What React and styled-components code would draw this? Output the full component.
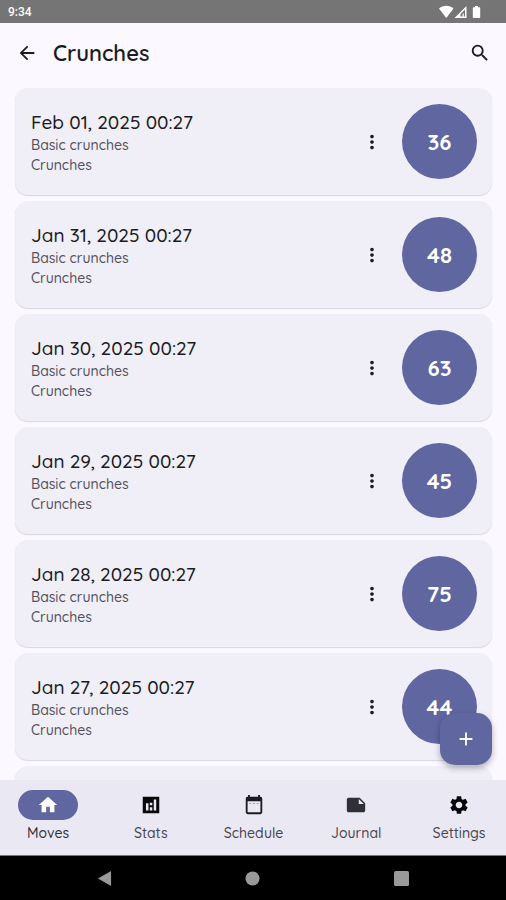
import React from 'react';
import styled, { createGlobalStyle } from 'styled-components';
import {
  MdAdd,
  MdArrowBack,
  MdHome,
  MdMoreVert,
  MdNote,
  MdSearch,
  MdSettings,
} from 'react-icons/md';

const GlobalStyle = createGlobalStyle`
  :root {
    --c-primary: #6066a0;
    --c-background: #fbf8ff;
    --c-card: #f0eef7;
    --c-nav: #eae8f3;
    --c-text: #1b1b21;
    --c-text-muted: #53525c;
  }

  *,
  *::before,
  *::after {
    box-sizing: border-box;
  }

  body {
    margin: 0;
    background: var(--c-background);
    color: var(--c-text);
    font-family: Quicksand, Inter, sans-serif;
  }

  button {
    padding: 0;
    border: 0;
    background: none;
    color: inherit;
    font: inherit;
    cursor: pointer;
  }
`;

const Screen = styled.div`
  display: flex;
  flex-direction: column;
  height: 100vh;
`;

const StatusBar = styled.div`
  display: flex;
  flex: none;
  align-items: center;
  justify-content: space-between;
  height: 23px;
  padding: 0 24px 0 8px;
  background: #757575;
  color: #fff;
  font-family: Roboto, sans-serif;
  font-size: 12px;
  line-height: 16px;
  font-weight: 500;
`;

const StatusIcons = styled.svg`
  display: block;
  width: 43px;
  height: 14px;
`;

const Header = styled.header`
  display: flex;
  flex: none;
  align-items: center;
  height: 60px;
  padding: 0 4px 0 5px;
`;

const IconButton = styled.button`
  display: grid;
  flex: none;
  place-items: center;
  width: 44px;
  height: 44px;
  font-size: 22px;
`;

const Title = styled.h1`
  flex: 1;
  margin: 0 0 0 4px;
  font-size: 22px;
  line-height: 28px;
  font-weight: 600;
`;

const Main = styled.main`
  position: relative;
  flex: 1;
  min-height: 0;
`;

const EntryList = styled.ul`
  display: flex;
  flex-direction: column;
  gap: 6px;
  height: 100%;
  margin: 0;
  padding: 5px 14px 5px 15px;
  overflow: hidden;
  list-style: none;
`;

const Card = styled.li`
  display: flex;
  flex: none;
  align-items: center;
  gap: 8px;
  padding: 16px 15px 16px 16px;
  border-radius: 13px;
  background: var(--c-card);
  box-shadow: 0 1px 1px rgba(40, 40, 70, 0.16);
`;

const EntryText = styled.div`
  flex: 1;
  min-width: 0;
`;

const EntryDate = styled.h2`
  margin: 0;
  font-size: 19px;
  line-height: 26px;
  font-weight: 500;
`;

const EntryDetail = styled.p`
  margin: 0;
  color: var(--c-text-muted);
  font-size: 14px;
  line-height: 20px;
  font-weight: 500;
`;

const Count = styled.span`
  display: grid;
  flex: none;
  place-items: center;
  width: 75px;
  height: 75px;
  border-radius: 50%;
  background: var(--c-primary);
  color: #fff;
  font-size: 22px;
  font-weight: 700;
`;

const AddButton = styled.button`
  position: absolute;
  right: 14px;
  bottom: 15px;
  display: grid;
  place-items: center;
  width: 52px;
  height: 52px;
  border-radius: 15px;
  background: var(--c-primary);
  box-shadow: 0 3px 6px rgba(0, 0, 0, 0.3);
  color: #fff;
  font-size: 22px;
`;

const NavBar = styled.nav`
  display: flex;
  flex: none;
  justify-content: space-between;
  height: 75px;
  padding: 10px 17px 0 18px;
  background: var(--c-nav);
`;

const NavItem = styled.a`
  display: flex;
  flex-direction: column;
  align-items: center;
  gap: 3px;
  width: 60px;
  color: ${(props) => (props.$active ? '#303039' : '#47464f')};
  font-size: 14px;
  line-height: 20px;
  font-weight: 500;
  text-decoration: none;
`;

const NavIcon = styled.span`
  display: grid;
  place-items: center;
  width: 60px;
  height: 30px;
  border-radius: 15px;
  background: ${(props) =>
    props.$active ? 'var(--c-primary)' : 'transparent'};
  color: ${(props) => (props.$active ? '#fff' : props.$tint)};
  font-size: 22px;
`;

const SystemBar = styled.div`
  display: grid;
  flex: none;
  grid-template-columns: repeat(3, 1fr);
  height: 45px;
  padding: 0 30px;
  border-top: 1px solid #77767c;
  background: #000;
`;

const SystemButton = styled.button`
  display: grid;
  place-items: center;

  svg {
    width: 15px;
    height: 15px;
    fill: #999;
  }
`;

const StatsIcon = () => (
  <svg width="1em" height="1em" viewBox="0 0 24 24" fill="currentColor">
    <path
      fillRule="evenodd"
      d="M3 3h18v18H3zM6.500 10v8h2.700v-8zM10.700 14.500V18h2.700v-3.500zM10.700 9.500v2.700h2.700V9.500zM15 6v12h2.700V6z"
    />
  </svg>
);

const ScheduleIcon = () => (
  <svg width="1em" height="1em" viewBox="0 0 24 24" fill="currentColor">
    <path
      fillRule="evenodd"
      d="M5.500 1h2v2h9V1h2v2h.500a2 2 0 0 1 2 2v15a2 2 0 0 1-2 2H5a2 2 0 0 1-2-2V5a2 2 0 0 1 2-2h.500zM5 8v12h14V8z"
    />
    <path d="M7 10h2v1H7zM11 10h2v1h-2zM15 10h2v1h-2z" opacity="0.5" />
  </svg>
);

const entries = [
  { date: 'Feb 01, 2025 00:27', count: 36 },
  { date: 'Jan 31, 2025 00:27', count: 48 },
  { date: 'Jan 30, 2025 00:27', count: 63 },
  { date: 'Jan 29, 2025 00:27', count: 45 },
  { date: 'Jan 28, 2025 00:27', count: 75 },
  { date: 'Jan 27, 2025 00:27', count: 44 },
];

const navItems = [
  { label: 'Moves', Icon: MdHome, active: true },
  { label: 'Stats', Icon: StatsIcon, tint: '#08080a' },
  { label: 'Schedule', Icon: ScheduleIcon, tint: '#1b1b21' },
  { label: 'Journal', Icon: MdNote, tint: '#303039' },
  { label: 'Settings', Icon: MdSettings, tint: '#08080a' },
];

const Entry = ({ date, count }) => (
  <Card>
    <EntryText>
      <EntryDate>{date}</EntryDate>
      <EntryDetail>Basic crunches</EntryDetail>
      <EntryDetail>Crunches</EntryDetail>
    </EntryText>
    <IconButton type="button" aria-label={`Options for ${date}`}>
      <MdMoreVert />
    </IconButton>
    <Count>{count}</Count>
  </Card>
);

const App = () => (
  <Screen>
    <GlobalStyle />

    <StatusBar>
      <span>9:34</span>
      <StatusIcons viewBox="0 0 43 14" fill="#fff" aria-hidden="true">
        <path d="M0 3.600C4-.200 10.500-.200 14.500 3.600L7.300 13z" />
        <path
          fillRule="evenodd"
          d="M15.500 13L27.500 1v12zM21.500 11.600h4.500V4.600l-4.500 4.500z"
        />
        <path d="M23.500 8.500h1.300v3.500h-1.300z" />
        <path d="M36 1h3v1.200h1.500q.700 0 .700.800v9.200q0 .800-.800.800h-5.800q-.800 0-.800-.800V3q0-.800.700-.800H36z" />
      </StatusIcons>
    </StatusBar>

    <Header>
      <IconButton type="button" aria-label="Back">
        <MdArrowBack />
      </IconButton>
      <Title>Crunches</Title>
      <IconButton type="button" aria-label="Search">
        <MdSearch />
      </IconButton>
    </Header>

    <Main>
      <EntryList>
        {entries.map((entry) => (
          <Entry key={entry.date} {...entry} />
        ))}
        {/* the next card shows only its top edge above the nav bar */}
        <Card aria-hidden="true" />
      </EntryList>
      <AddButton type="button" aria-label="Add entry">
        <MdAdd />
      </AddButton>
    </Main>

    <NavBar>
      {navItems.map(({ label, Icon, active, tint }) => (
        <NavItem
          key={label}
          href={`#${label.toLowerCase()}`}
          $active={active}
          aria-current={active ? 'page' : undefined}
        >
          <NavIcon $active={active} $tint={tint}>
            <Icon />
          </NavIcon>
          {label}
        </NavItem>
      ))}
    </NavBar>

    <SystemBar>
      <SystemButton type="button" aria-label="System back">
        <svg viewBox="0 0 16 16">
          <path d="M1 8L15 0v16z" />
        </svg>
      </SystemButton>
      <SystemButton type="button" aria-label="System home">
        <svg viewBox="0 0 16 16">
          <circle cx="8" cy="8" r="7.500" />
        </svg>
      </SystemButton>
      <SystemButton type="button" aria-label="Recent apps">
        <svg viewBox="0 0 16 16">
          <rect width="16" height="16" rx="2" />
        </svg>
      </SystemButton>
    </SystemBar>
  </Screen>
);

export default App;
